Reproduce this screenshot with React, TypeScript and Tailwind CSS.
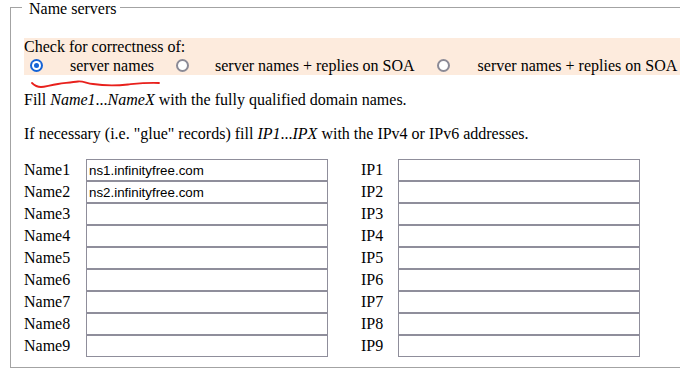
import React from 'react';

const NAMES = [
  'ns1.infinityfree.com',
  'ns2.infinityfree.com',
  '',
  '',
  '',
  '',
  '',
  '',
  '',
];

function Radio({ checked }: { checked?: boolean }) {
  if (checked) {
    return (
      <span className="flex h-[13px] w-[13px] shrink-0 items-center justify-center rounded-full bg-[#1563d6]">
        <span className="flex h-[9px] w-[9px] items-center justify-center rounded-full bg-white">
          <span className="h-[5px] w-[5px] rounded-full bg-[#1563d6]" />
        </span>
      </span>
    );
  }
  return <span className="block h-[13px] w-[13px] shrink-0 rounded-full border-2 border-[#8b8a96] bg-white" />;
}

function Field({ value }: { value: string }) {
  return (
    <input
      readOnly
      defaultValue={value}
      className="h-[22px] w-[242px] border border-[#8f8e9b] bg-white px-[2px] font-['Liberation_Sans',Arial,sans-serif] text-[13.33px] text-black outline-none"
    />
  );
}

export default function App() {
  return (
    <div className="h-[377px] w-[680px] overflow-hidden bg-white pt-[7px] font-['Liberation_Serif','Times_New_Roman',serif] text-[16px] leading-[18px] text-black">
      <div className="relative ml-[10px] w-[700px] border border-[#a3a3a3] pb-[10px] pl-[13px]">
        <span className="absolute left-[11px] top-[-8px] bg-white pl-[7px] pr-[3px]">Name servers</span>

        <div className="relative mt-[30px] bg-[#fdebdd]">
          <div>Check for correctness of:</div>
          <div className="flex h-[19px] items-center">
            <span className="ml-[6px]">
              <Radio checked />
            </span>
            <span className="ml-[27px]">server names</span>
            <span className="ml-[22px]">
              <Radio />
            </span>
            <span className="ml-[26px]">server names + replies on SOA</span>
            <span className="ml-[22px]">
              <Radio />
            </span>
            <span className="ml-[28px]">server names + replies on SOA</span>
          </div>
          <svg className="absolute left-[4px] top-[42px] h-[14px] w-[140px]" viewBox="0 0 140 14" fill="none">
            <path
              d="M4 3 C7 6, 10 7, 13 7 C17 7, 22 5, 30 4 C38 3, 45 2, 50 1.5 C55 1, 58 3, 65 4 C75 5.5, 90 5.5, 100 4.5 C110 3.5, 118 2.5, 131 3"
              stroke="#e8201c"
              strokeWidth="1.8"
              strokeLinecap="round"
            />
          </svg>
        </div>

        <p className="mt-4">
          Fill <i>Name1</i>...<i>NameX</i> with the fully qualified domain names.
        </p>
        <p className="mt-4">
          If necessary (i.e. "glue" records) fill <i>IP1</i>...<i>IPX</i> with the IPv4 or IPv6 addresses.
        </p>

        <div className="mt-4 flex flex-col">
          {NAMES.map((name, i) => (
            <div key={i} className="flex h-[22px] items-center">
              <span className="w-[62px]">Name{i + 1}</span>
              <Field value={name} />
              <span className="ml-[33px] w-[37px]">IP{i + 1}</span>
              <Field value="" />
            </div>
          ))}
        </div>
      </div>
    </div>
  );
}
